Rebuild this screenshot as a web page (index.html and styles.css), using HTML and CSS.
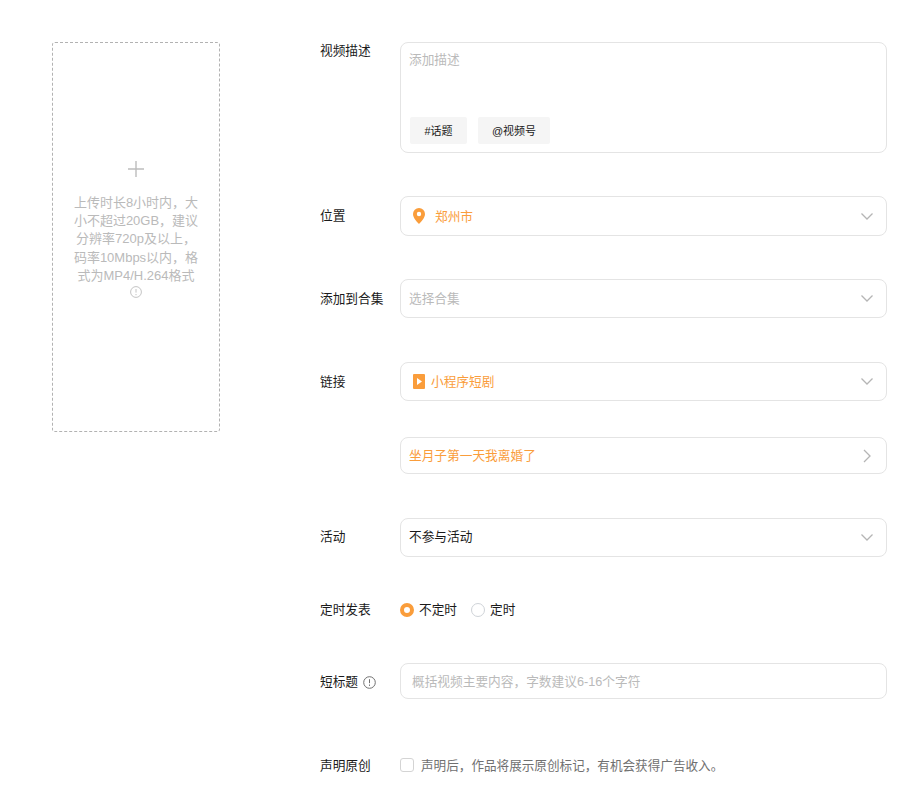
FILE: index.html
```html
<!DOCTYPE html>
<html lang="zh-CN">
<head>
<meta charset="utf-8">
<title>发表视频</title>
<link rel="stylesheet" href="styles.css">
</head>
<body>
<main class="page">
  <section class="upload">
    <svg class="plus" width="18" height="18" viewBox="0 0 18 18"><path d="M9 1v16M1 9h16" stroke="#bdbdbd" stroke-width="1.4" fill="none"/></svg>
    <p class="upload-text">上传时长8小时内，大小不超过20GB，建议分辨率720p及以上，码率10Mbps以内，格式为MP4/H.264格式</p>
    <svg class="info" width="12" height="12" viewBox="0 0 12 12"><circle cx="6" cy="6" r="5.4" stroke="#c4c4c4" fill="none"/><path d="M6 3v3.6M6 8v1.2" stroke="#c4c4c4" fill="none"/></svg>
  </section>
  <form class="form">
    <div class="row row-desc">
      <label class="label label-top">视频描述</label>
      <div class="box desc">
        <div class="placeholder">添加描述</div>
        <div class="tags"><span class="tag tag-a">#话题</span><span class="tag tag-b">@视频号</span></div>
      </div>
    </div>
    <div class="row row-loc">
      <label class="label">位置</label>
      <div class="box select h40">
        <svg class="pin" width="12" height="16" viewBox="0 0 12 16"><path fill-rule="evenodd" d="M6 0a6 6 0 0 1 6 6c0 3.800-3.600 7.600-6 10-2.400-2.400-6-6.200-6-10a6 6 0 0 1 6-6zm0 3.800a2.200 2.200 0 1 0 0 4.400 2.200 2.200 0 0 0 0-4.400z" fill="#fa9d3b"/></svg>
        <span class="orange">郑州市</span>
        <svg class="chev" width="12" height="7" viewBox="0 0 12 7"><path d="M.5.5L6 6l5.500-5.500" stroke="#b5b5b5" stroke-width="1.300" fill="none"/></svg>
      </div>
    </div>
    <div class="row row-coll">
      <label class="label">添加到合集</label>
      <div class="box select h39">
        <span class="grey">选择合集</span>
        <svg class="chev" width="12" height="7" viewBox="0 0 12 7"><path d="M.5.5L6 6l5.500-5.500" stroke="#b5b5b5" stroke-width="1.300" fill="none"/></svg>
      </div>
    </div>
    <div class="row row-link">
      <label class="label">链接</label>
      <div class="box select h39">
        <svg class="play" width="12" height="15" viewBox="0 0 12 15"><rect width="12" height="15" rx="1" fill="#fa9d3b"/><path d="M4 4l5 3.500-5 3.500z" fill="#fff"/></svg>
        <span class="orange">小程序短剧</span>
        <svg class="chev" width="12" height="7" viewBox="0 0 12 7"><path d="M.5.5L6 6l5.500-5.500" stroke="#b5b5b5" stroke-width="1.300" fill="none"/></svg>
      </div>
    </div>
    <div class="row row-sub">
      <div class="label"></div>
      <div class="box select h37">
        <span class="orange">坐月子第一天我离婚了</span>
        <svg class="chev-r" width="8" height="14" viewBox="0 0 8 14"><path d="M1 1l6 6-6 6" stroke="#b5b5b5" stroke-width="1.300" fill="none"/></svg>
      </div>
    </div>
    <div class="row row-act">
      <label class="label label-up">活动</label>
      <div class="box select select-act h39">
        <span class="dark">不参与活动</span>
        <svg class="chev" width="12" height="7" viewBox="0 0 12 7"><path d="M.5.5L6 6l5.500-5.500" stroke="#b5b5b5" stroke-width="1.300" fill="none"/></svg>
      </div>
    </div>
    <div class="row row-time">
      <label class="label">定时发表</label>
      <div class="radios">
        <span class="radio-item"><i class="radio radio-on"></i>不定时</span>
        <span class="radio-item"><i class="radio"></i>定时</span>
      </div>
    </div>
    <div class="row row-short">
      <label class="label label-info">短标题
        <svg width="13" height="13" viewBox="0 0 13 13"><circle cx="6.500" cy="6.500" r="5.800" stroke="#707070" fill="none"/><path d="M6.500 3.200v4M6.500 8.500v1.400" stroke="#707070" fill="none"/></svg>
      </label>
      <div class="box input h36"><span class="grey short-ph">概括视频主要内容，字数建议6-16个字符</span></div>
    </div>
    <div class="row row-orig">
      <label class="label label-down">声明原创</label>
      <i class="check"></i>
      <span class="check-text">声明后，作品将展示原创标记，有机会获得广告收入。</span>
    </div>
  </form>
</main>
</body>
</html>
```
FILE: styles.css
```css
* { box-sizing: border-box; }
html, body { margin: 0; padding: 0; background: #fff; }
body {
  height: 806px;
  overflow: hidden;
  font-family: "Liberation Sans", "Noto Sans CJK SC", sans-serif;
  font-size: 12.7px;
  color: #1a1a1a;
}
.page { display: flex; align-items: flex-start; padding: 42px 0 0 52px; }
.upload {
  width: 168px;
  height: 390px;
  flex: none;
  border: 1px dashed #b2b2b2;
  border-radius: 3px;
  margin-right: 100px;
  padding-top: 117px;
  display: flex;
  flex-direction: column;
  align-items: center;
}
.upload-text {
  margin: 16px 0 0;
  width: 128px;
  text-align: center;
  color: #bababa;
  line-height: 18.2px;
  font-size: 13px;
  word-break: break-all;
}
.info { margin-top: 1px; }
.form { width: 567px; flex: none; }
.row { display: flex; align-items: center; }
.label { width: 80px; flex: none; line-height: 18px; }
.label-top { align-self: flex-start; }
.label-up { padding-bottom: 2px; }
.label-down { padding-top: 2px; }
.label-info { display: flex; align-items: center; gap: 5px; padding-top: 2px; }
.box {
  flex: 1;
  border: 1px solid #e4e4e4;
  border-radius: 8px;
  background: #fff;
}
.desc { height: 111px; padding: 8px 8px; display: flex; flex-direction: column; justify-content: space-between; }
.placeholder { color: #bababa; line-height: 18px; }
.tags { display: flex; gap: 11px; margin-left: 1px; }
.tag {
  height: 27px;
  background: #f5f5f5;
  border-radius: 2px;
  font-size: 11px;
  line-height: 29px;
  text-align: center;
}
.tag-a { width: 57px; }
.tag-b { width: 72px; }
.select { display: flex; align-items: center; padding: 0 12px 2px 8px; }
.select-act { padding-bottom: 4px; }
.select-act .chev { margin-top: 3px; }
.input { display: flex; align-items: center; padding: 0 12px 2px 8px; }
.h40 { height: 40px; }
.h39 { height: 39px; }
.h37 { height: 37px; }
.h36 { height: 36px; }
.orange { color: #fa9d3b; }
.grey { color: #bababa; }
.dark { color: #1a1a1a; }
.pin { margin: 2px 10px 0 4px; flex: none; }
.play { margin: 2px 6px 0 4px; flex: none; }
.chev { margin: 2px 1px 0 auto; }
.chev-r { margin: 3px 3px 0 auto; }
.short-ph { margin-left: 3px; font-size: 12.7px; }
.row-desc { align-items: flex-start; }
.row-loc { margin-top: 43px; }
.row-coll { margin-top: 43px; }
.row-link { margin-top: 44px; }
.row-sub { margin-top: 36px; }
.row-act { margin-top: 44px; }
.row-time { margin-top: 43px; height: 20px; }
.row-short { margin-top: 43px; }
.row-orig { margin-top: 56px; height: 20px; }
.radios { display: flex; gap: 14px; }
.radio-item { display: flex; align-items: center; gap: 5px; line-height: 20px; }
.radio {
  width: 14px;
  height: 14px;
  border: 1px solid #cfd3d8;
  border-radius: 50%;
  display: block;
}
.radio-on { border: 4px solid #fa9d3b; background: #fff; }
.check {
  width: 14px;
  height: 14px;
  border: 1px solid #d4d4d4;
  border-radius: 3px;
  display: block;
  margin-right: 7px;
}
.check-text { color: #707070; font-size: 12.6px; padding-bottom: 2px; }
```
